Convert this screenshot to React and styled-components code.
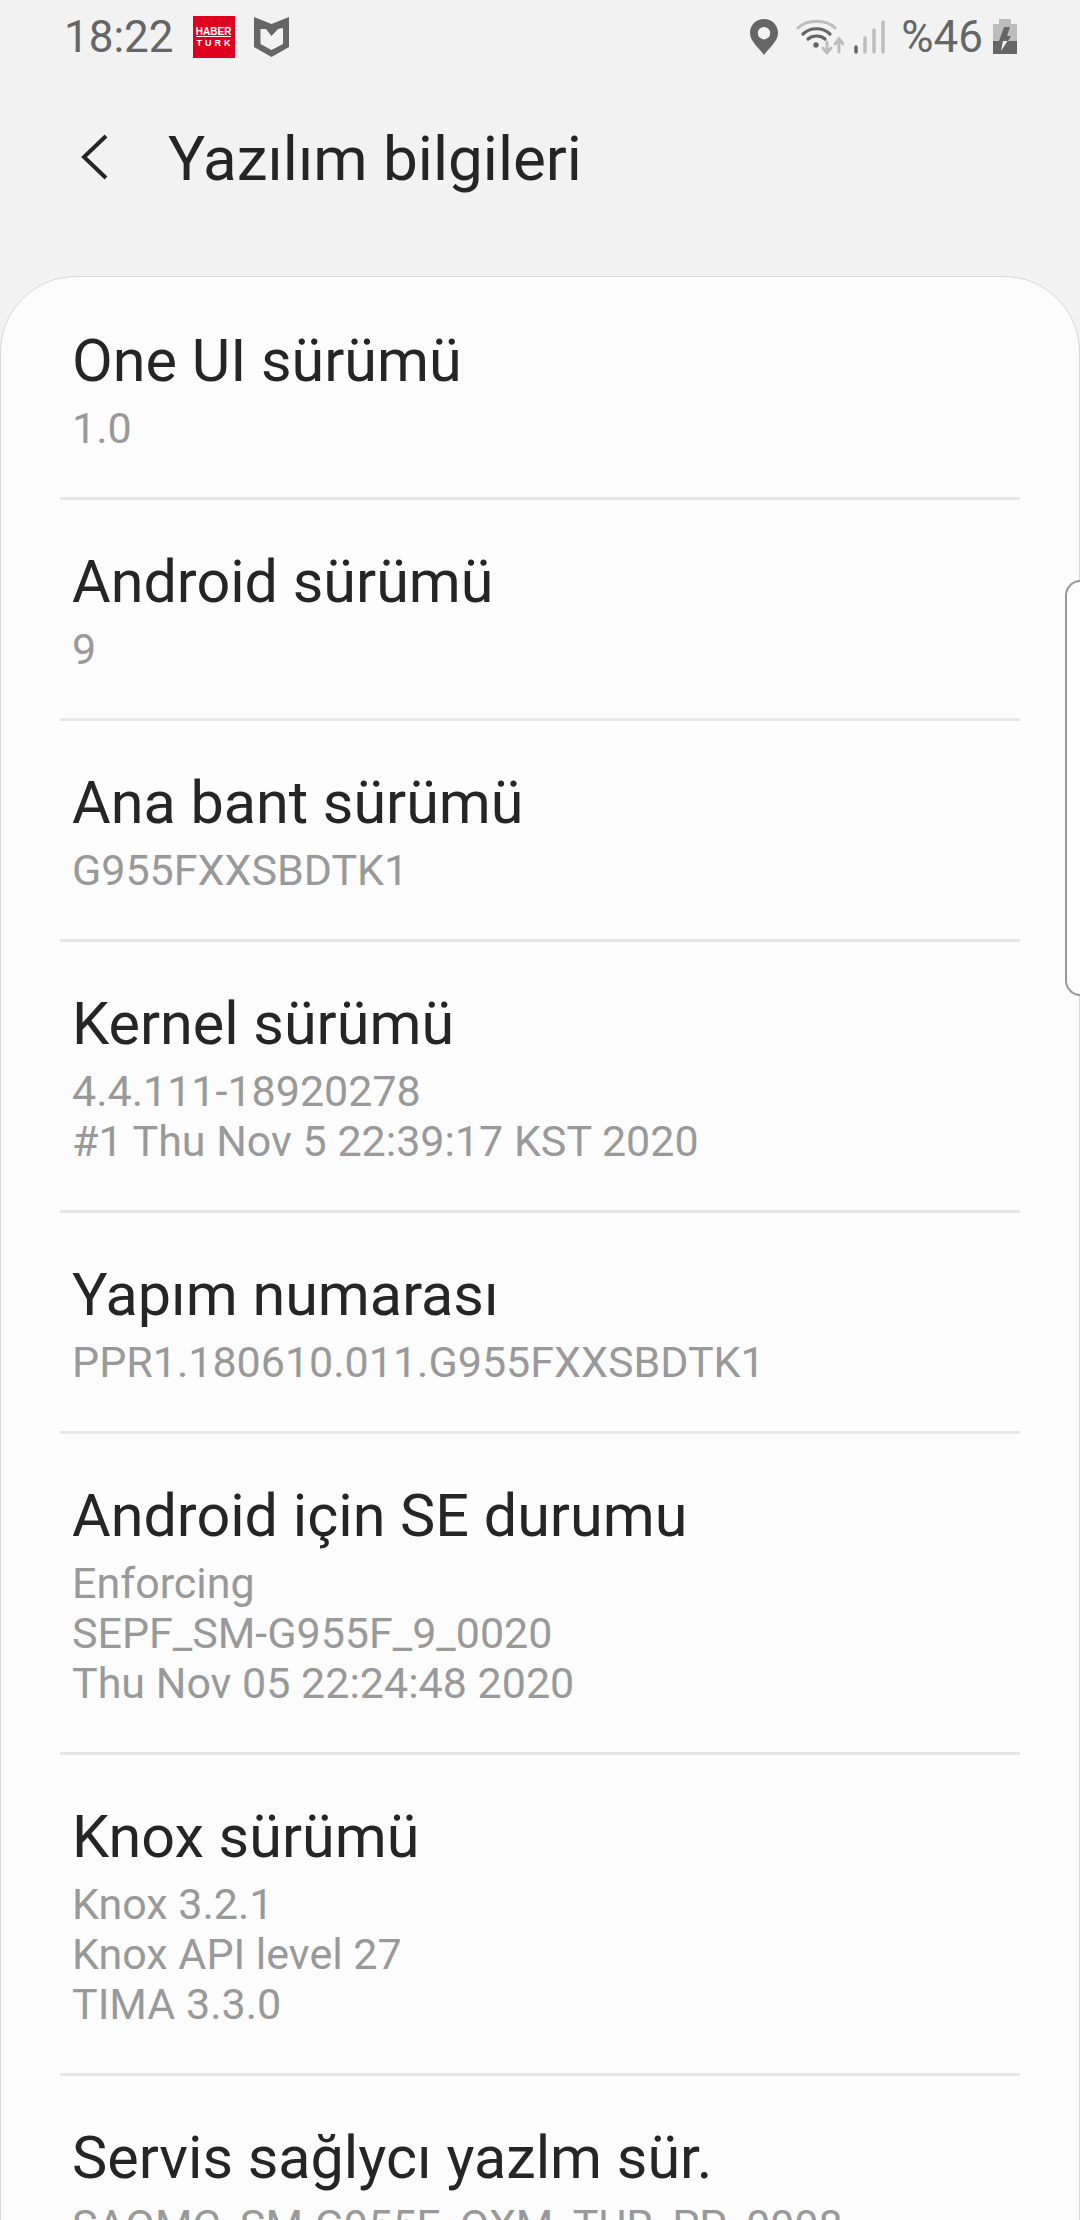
import React from 'react'
import styled, { createGlobalStyle } from 'styled-components'

const GlobalStyle = createGlobalStyle`
    html, body {
        margin: 0;
        padding: 0;
        background: #f2f2f2;
    }
`;

const Page = styled.div`
    position: relative;
    width: 1080px;
    height: 2220px;
    overflow: hidden;
    background: #f2f2f2;
    font-family: Roboto, "Noto Sans", sans-serif;
`;

const StatusBar = styled.div`
    display: flex;
    align-items: center;
    justify-content: space-between;
    height: 74px;
    padding: 0 63px 0 64px;
`;

const StatusGroup = styled.div`
    display: flex;
    align-items: center;
`;

const Clock = styled.span`
    font-size: 44px;
    color: #666666;
    margin-right: 19px;
`;

const Percent = styled.span`
    font-size: 44px;
    color: #666666;
    margin: 0 10px 0 16px;
`;

const HaberLogo = styled.div`
    display: flex;
    flex-direction: column;
    align-items: center;
    justify-content: center;
    width: 42px;
    height: 42px;
    background: #e0001f;
    color: white;
    font-family: "Liberation Sans", sans-serif;
    font-weight: bold;
    margin-right: 19px;
`;

const HaberTop = styled.span`
    border-bottom: 1px solid white;
    font-size: 10px;
    line-height: 9px;
`;

const HaberBottom = styled.span`
    font-size: 9px;
    line-height: 9px;
    letter-spacing: 3px;
    margin: 2px -3px 0 0;
`;

const Toolbar = styled.div`
    display: flex;
    align-items: center;
    height: 168px;
    padding-left: 78px;
`;

const BackIcon = styled.svg`
    width: 32px;
    height: 52px;
    margin-right: 58px;
`;

const Heading = styled.h1`
    margin: 0;
    font-size: 62px;
    font-weight: 400;
    color: #252525;
`;

const Card = styled.div`
    margin-top: 34px;
    background: #fcfcfc;
    border: 1px solid #d8d8d8;
    border-radius: 76px 76px 0 0;
    padding: 2px 59px 0;
`;

const Row = styled.div`
    display: flex;
    flex-direction: column;
    padding: 47px 12px 44px;
    border-bottom: 3px solid #e6e6e6;

    &:last-child {
        border-bottom: none;
    }
`;

const Title = styled.div`
    font-size: 59.3px;
    line-height: 70px;
    margin-bottom: 7px;
    color: #252525;
`;

const Sub = styled.div`
    font-size: 43px;
    line-height: 50px;
    color: #999999;
`;

const Handle = styled.div`
    position: absolute;
    top: 580px;
    right: -16px;
    width: 31px;
    height: 416px;
    box-sizing: border-box;
    background: #fdfdfd;
    border: 2px solid #9a9a9a;
    border-radius: 16px;
`;

const rows = [
    { title: 'One UI sürümü', lines: ['1.0'] },
    { title: 'Android sürümü', lines: ['9'] },
    { title: 'Ana bant sürümü', lines: ['G955FXXSBDTK1'] },
    { title: 'Kernel sürümü', lines: ['4.4.111-18920278', '#1 Thu Nov 5 22:39:17 KST 2020'] },
    { title: 'Yapım numarası', lines: ['PPR1.180610.011.G955FXXSBDTK1'] },
    { title: 'Android için SE durumu', lines: ['Enforcing', 'SEPF_SM-G955F_9_0020', 'Thu Nov 05 22:24:48 2020'] },
    { title: 'Knox sürümü', lines: ['Knox 3.2.1', 'Knox API level 27', 'TIMA 3.3.0'] },
    { title: 'Servis sağlycı yazlm sür.', lines: ['SAOMC_SM-G955F_OXM_TUR_PP_0008'] },
]

export default function App() {
    return (
        <Page>
            <GlobalStyle />
            <StatusBar>
                <StatusGroup>
                    <Clock>18:22</Clock>
                    <HaberLogo>
                        <HaberTop>HABER</HaberTop>
                        <HaberBottom>TURK</HaberBottom>
                    </HaberLogo>
                    <svg width="35" height="40" viewBox="0 0 35 40">
                        <path fillRule="evenodd" fill="#666666" d="M0 0L17.5 7L35 0V30L17.5 40L0 30ZM6.5 12V27L17.5 33L29 27V11L24 12L17.5 19L12 12Z" />
                    </svg>
                </StatusGroup>
                <StatusGroup>
                    <svg width="28" height="36" viewBox="0 0 28 36" style={{ marginRight: 18 }}>
                        <path fillRule="evenodd" fill="#666666" d="M14 0C22 0 28 6 28 14C28 22 20 28 14 36C8 28 0 22 0 14C0 6 6 0 14 0ZM14 8A6.2 6.2 0 1 0 14 20.4A6.2 6.2 0 1 0 14 8Z" />
                    </svg>
                    <svg width="48" height="36" viewBox="0 0 48 36" fill="none" strokeLinecap="round">
                        <path d="M2 9C11 0 30 0 39 9" stroke="#bdbdbd" strokeWidth="3" />
                        <path d="M7 15C14 8 27 8 34 15" stroke="#666666" strokeWidth="3.2" />
                        <path d="M12 20C16 16 25 16 29 20" stroke="#666666" strokeWidth="3.2" />
                        <circle cx="20" cy="26" r="2.7" fill="#666666" />
                        <path d="M31 23V34M27 29L31 34L35 29" stroke="#bdbdbd" strokeWidth="3" />
                        <path d="M43 33V21M39 25L43 20L47 25" stroke="#bdbdbd" strokeWidth="3" />
                    </svg>
                    <svg width="32" height="34" viewBox="0 0 32 34" fill="none" strokeLinecap="round" strokeWidth="3.5" style={{ marginLeft: 9 }}>
                        <path d="M3 27V32" stroke="#666666" />
                        <path d="M12 18V32" stroke="#bdbdbd" />
                        <path d="M21 10V32" stroke="#bdbdbd" />
                        <path d="M30 2V32" stroke="#bdbdbd" />
                    </svg>
                    <Percent>%46</Percent>
                    <svg width="24" height="36" viewBox="0 0 24 36">
                        <path fill="#bdbdbd" d="M6 0H18V5H24V23H0V5H6Z" />
                        <path fill="#666666" d="M0 22H24V35H0Z" />
                        <path fill="#666666" d="M11 8H17L14 17H18L15 22H6Z" />
                        <path fill="#f2f2f2" d="M7 22H14.5L8 32L10 22Z" />
                    </svg>
                </StatusGroup>
            </StatusBar>
            <Toolbar>
                <BackIcon viewBox="0 0 32 52" fill="none">
                    <path d="M28 4L6 25L28 46" stroke="#252525" strokeWidth="4" />
                </BackIcon>
                <Heading>Yazılım bilgileri</Heading>
            </Toolbar>
            <Card>
                {rows.map((row) => (
                    <Row key={row.title}>
                        <Title>{row.title}</Title>
                        {row.lines.map((line) => (
                            <Sub key={line}>{line}</Sub>
                        ))}
                    </Row>
                ))}
            </Card>
            <Handle />
        </Page>
    )
}
